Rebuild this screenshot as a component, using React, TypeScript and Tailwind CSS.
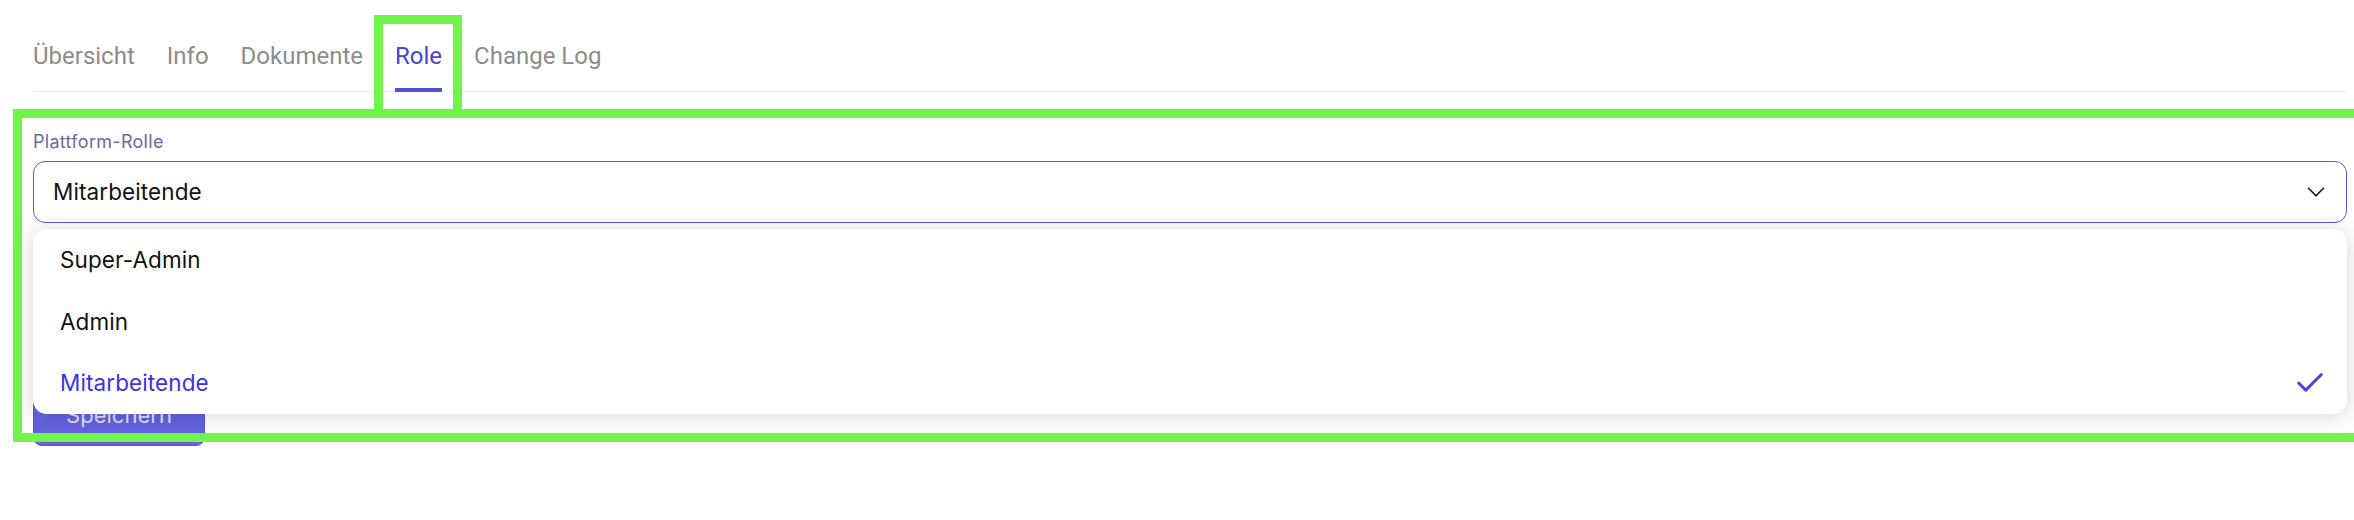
import { Check, ChevronDown } from "lucide-react";

const tabs = ["Übersicht", "Info", "Dokumente", "Role", "Change Log"];
const roles = ["Super-Admin", "Admin", "Mitarbeitende"];

export default function App() {
  const activeTab = "Role";
  const selected = "Mitarbeitende";

  return (
    <div className="relative w-[2354px] h-[520px] overflow-hidden bg-white">
      <div className="pl-[33px] pr-[7px] pt-[36px]">
        {/* tabs */}
        <div className="flex gap-[32px] border-b border-[#efefef] font-['Roboto',sans-serif] text-[24px] leading-[40px]">
          {tabs.map((tab) => (
            <div
              key={tab}
              className={`flex flex-col ${tab === activeTab ? "text-[#4a43d6]" : "text-[#8c8c8c]"}`}
            >
              <span>{tab}</span>
              <span
                className={`mt-[12px] -mb-[1px] h-[4px] w-full ${tab === activeTab ? "bg-[#5350dc]" : "bg-transparent"}`}
              />
            </div>
          ))}
        </div>

        {/* form */}
        <div className="relative mt-[40px] font-['Inter',sans-serif]">
          <label className="block text-[18px] leading-[20px] tracking-[0.3px] text-[#6b6a9c]">Plattform-Rolle</label>
          <div className="mt-[9px] flex h-[62px] items-center justify-between rounded-[12px] border border-[#5b55e0] pl-[19px] pr-[15px] text-[22.5px] tracking-[0.1px] text-[#111]">
            <span>{selected}</span>
            <ChevronDown className="h-[30px] w-[30px] text-[#111]" strokeWidth={1.3} />
          </div>

          <div className="h-[169px]" />
          <button className="flex h-[54px] w-[172px] items-center justify-center rounded-[9px] border border-[#5552d8] bg-[#6462df] pb-[8px] text-[22px] text-[#e2e0fa]">
            Speichern
          </button>

          {/* open dropdown */}
          <div className="absolute left-0 right-0 top-[97px] z-10 rounded-[14px] bg-white shadow-[0_2px_22px_rgba(0,0,0,0.16)]">
            {roles.map((role) => (
              <div
                key={role}
                className={`flex h-[61.7px] items-center justify-between pl-[27px] pr-[20px] text-[22.5px] tracking-[0.1px] ${
                  role === selected ? "text-[#3c32e2]" : "text-[#111]"
                }`}
              >
                <span>{role}</span>
                {role === selected && <Check className="h-[34px] w-[34px] text-[#4d44dd]" strokeWidth={2.1} />}
              </div>
            ))}
          </div>
        </div>
      </div>

      {/* highlight boxes */}
      <div className="absolute left-[374px] top-[15px] z-20 h-[95px] w-[88px] border-[9px] border-b-0 border-[#70f44c]" />
      <div className="absolute left-[13px] top-[109px] z-20 h-[333px] w-[2400px] border-[9px] border-[#70f44c]" />
    </div>
  );
}
